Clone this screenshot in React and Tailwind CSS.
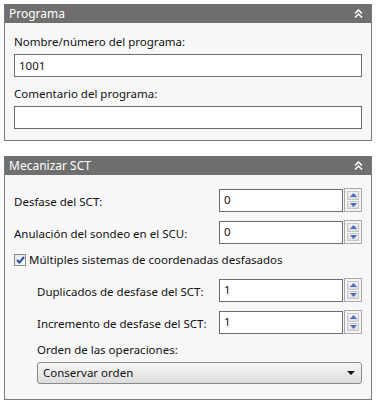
const font = { fontFamily: '"Noto Sans", "DejaVu Sans", sans-serif' }

function Chevrons() {
  return (
    <svg width="9" height="9" viewBox="0 0 9 9" fill="none" stroke="white" strokeWidth="1.5">
      <path d="M1 4.5 L4.5 1 L8 4.5" />
      <path d="M1 8.5 L4.5 5 L8 8.5" />
    </svg>
  )
}

function PanelHeader({ title }) {
  return (
    <div className="flex items-center justify-between h-[19px] bg-[#6f6f6f] pl-[4px] pr-[8px] text-white text-[12px] leading-none">
      <span>{title}</span>
      <Chevrons />
    </div>
  )
}

function Spinner() {
  return (
    <div className="flex flex-col gap-[1px] w-[18px] h-[24px] border border-[#a8a8a8] p-[2px] bg-[#f4f4f4]">
      <div className="flex-1 flex items-center justify-center bg-gradient-to-b from-[#f2f2f2] to-[#dcdcdc] border border-[#c8c8c8]">
        <svg width="7" height="4" viewBox="0 0 7 4"><path d="M0 4 L3.5 0 L7 4 Z" fill="#4a6bc0" /></svg>
      </div>
      <div className="flex-1 flex items-center justify-center bg-gradient-to-b from-[#f2f2f2] to-[#dcdcdc] border border-[#c8c8c8]">
        <svg width="7" height="4" viewBox="0 0 7 4"><path d="M0 0 L3.5 4 L7 0 Z" fill="#4a6bc0" /></svg>
      </div>
    </div>
  )
}

function NumberRow({ label, value }) {
  return (
    <div className="flex items-center">
      <span className="flex-1 pt-[4px]">{label}</span>
      <div className="flex items-center gap-[1px]">
        <div className="w-[124px] h-[23px] border border-[#6c6c6c] bg-white px-[4px] pt-[1px] leading-[18px]">{value}</div>
        <Spinner />
      </div>
    </div>
  )
}

export default function App() {
  return (
    <div className="bg-white w-[376px] h-[402px] pt-[4px] px-[4px] text-[11.5px] text-[#111]" style={font}>
      {/* Programa */}
      <div className="border border-[#7a7a7a] border-t-0 bg-[#f7f7f7]">
        <PanelHeader title="Programa" />
        <div className="px-[9px] pt-[11px] pb-[11px] flex flex-col">
          <span className="leading-[16px]">Nombre/número del programa:</span>
          <div className="mt-[4px] h-[23px] border border-[#6c6c6c] bg-white px-[4px] leading-[21px]">1001</div>
          <span className="mt-[9px] leading-[16px]">Comentario del programa:</span>
          <div className="mt-[4px] h-[23px] border border-[#6c6c6c] bg-white"></div>
        </div>
      </div>

      {/* Mecanizar SCT */}
      <div className="mt-[15px] border border-[#7a7a7a] border-t-0 bg-[#f7f7f7]">
        <PanelHeader title="Mecanizar SCT" />
        <div className="pl-[9px] pr-[9px] pt-[13px] pb-[15px] flex flex-col">
          <NumberRow label="Desfase del SCT:" value="0" />
          <div className="mt-[8px]">
            <NumberRow label="Anulación del sondeo en el SCU:" value="0" />
          </div>
          <label className="mt-[8px] flex items-center gap-[3px] leading-[16px]">
            <span className="w-[12px] h-[12px] border border-[#8a8a8a] bg-gradient-to-br from-[#e4e4e4] to-[#ffffff] flex items-center justify-center">
              <svg width="9" height="8" viewBox="0 0 9 8" fill="none" stroke="#2a4fb0" strokeWidth="2">
                <path d="M1 4 L3.5 6.5 L8 1" />
              </svg>
            </span>
            <span>Múltiples sistemas de coordenadas desfasados</span>
          </label>
          <div className="pl-[23px] mt-[10px] flex flex-col">
            <NumberRow label="Duplicados de desfase del SCT:" value="1" />
            <div className="mt-[8px]">
              <NumberRow label="Incremento de desfase del SCT:" value="1" />
            </div>
            <span className="mt-[8px] leading-[16px]">Orden de las operaciones:</span>
            <div className="mt-[4px] h-[22px] rounded-[3px] border border-[#8a8a8a] bg-gradient-to-b from-[#f7f7f7] to-[#dcdcdc] flex items-center justify-between pl-[5px] pr-[6px]">
              <span>Conservar orden</span>
              <svg width="8" height="4" viewBox="0 0 8 4"><path d="M0 0 L8 0 L4 4 Z" fill="#111" /></svg>
            </div>
          </div>
        </div>
      </div>
    </div>
  )
}
